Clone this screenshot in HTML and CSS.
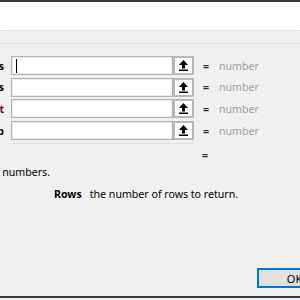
FILE: index.html
```html
<!DOCTYPE html>
<html lang="en">
<head>
    <meta charset="UTF-8">
    <meta name="viewport" content="width=device-width, initial-scale=1.0">
    <title>Function Arguments</title>
    <link rel="stylesheet" href="styles.css">
</head>
<body>
    <div class="frame-top"></div>
    <div class="header"></div>
    <div class="panel">
        <div class="band"></div>
        <div class="args">
            <div class="arg">
                <div class="label"><span>Rows</span></div>
                <div class="field"><span class="caret"></span></div>
                <button class="ref-btn"><svg width="9" height="11" viewBox="0 0 9 11"><path d="M4.5 0 L9 5 H6 V8.5 H3 V5 H0 Z" fill="#000"/><rect x="0" y="9.5" width="9" height="1.5" fill="#000"/></svg></button>
                <span class="eq">=</span>
                <span class="value">number</span>
            </div>
            <div class="arg">
                <div class="label"><span>Columns</span></div>
                <div class="field"></div>
                <button class="ref-btn"><svg width="9" height="11" viewBox="0 0 9 11"><path d="M4.5 0 L9 5 H6 V8.5 H3 V5 H0 Z" fill="#000"/><rect x="0" y="9.5" width="9" height="1.5" fill="#000"/></svg></button>
                <span class="eq">=</span>
                <span class="value">number</span>
            </div>
            <div class="arg">
                <div class="label start"><span>Start</span></div>
                <div class="field"></div>
                <button class="ref-btn"><svg width="9" height="11" viewBox="0 0 9 11"><path d="M4.5 0 L9 5 H6 V8.5 H3 V5 H0 Z" fill="#000"/><rect x="0" y="9.5" width="9" height="1.5" fill="#000"/></svg></button>
                <span class="eq">=</span>
                <span class="value">number</span>
            </div>
            <div class="arg">
                <div class="label"><span>Step</span></div>
                <div class="field"></div>
                <button class="ref-btn"><svg width="9" height="11" viewBox="0 0 9 11"><path d="M4.5 0 L9 5 H6 V8.5 H3 V5 H0 Z" fill="#000"/><rect x="0" y="9.5" width="9" height="1.5" fill="#000"/></svg></button>
                <span class="eq">=</span>
                <span class="value">number</span>
            </div>
        </div>
        <div class="divider"></div>
        <div class="result">=</div>
        <div class="desc"><span>Returns a sequence of numbers.</span></div>
        <div class="arg-desc">
            <b>Rows</b>
            <span>the number of rows to return.</span>
        </div>
        <div class="footer">
            <button class="ok">OK</button>
        </div>
    </div>
    <div class="frame-bottom"></div>
</body>
</html>
```

FILE: styles.css
```css
body {
    margin: 0;
    width: 300px;
    height: 300px;
    overflow: hidden;
    font-family: 'Noto Sans', 'Open Sans', sans-serif;
    font-size: 10.6px;
    color: #000;
    background: #f0f0f0;
}
.frame-top {
    height: 2px;
    background: #3c3c3c;
}
.header {
    height: 28px;
    background: #fff;
}
.panel {
    height: 266px;
    display: flex;
    flex-direction: column;
    background: #f0f0f0;
}
.band {
    height: 12px;
    border-top: 1px dotted #d8d8d8;
    border-bottom: 1px solid #e0e0e0;
}
.args {
    display: flex;
    flex-direction: column;
    gap: 2.7px;
    padding-top: 12px;
}
.arg {
    display: flex;
    align-items: center;
    height: 19px;
}
.label {
    width: 4px;
    display: flex;
    justify-content: flex-end;
    white-space: nowrap;
    font-weight: bold;
    margin-right: 7px;
}
.label.start {
    color: #5e1717;
}
.field {
    width: 162px;
    height: 19px;
    box-sizing: border-box;
    background: #fff;
    border: 1px solid #b2b2b2;
    box-shadow: inset 0 0 0 1px #ececec;
    display: flex;
    align-items: center;
    padding-left: 4px;
}
.caret {
    width: 1px;
    height: 14px;
    background: #000;
}
.ref-btn {
    width: 21px;
    height: 19px;
    margin: 0;
    padding: 0;
    background: #fff;
    border: 2px solid #b8b8b8;
    display: flex;
    align-items: center;
    justify-content: center;
}
.eq {
    margin-left: 9px;
    width: 16px;
    color: #333;
    font-weight: bold;
}
.value {
    color: #a0a0a0;
}
.divider {
    margin-top: 3px;
    margin-left: 13px;
    width: 180px;
    border-top: 1px dotted #cfcfcf;
}
.result {
    margin-top: 3px;
    height: 16px;
    line-height: 16px;
    padding-left: 202px;
    color: #333;
    font-weight: bold;
}
.desc {
    margin-top: 1px;
    width: 50px;
    height: 16px;
    line-height: 16px;
    display: flex;
    justify-content: flex-end;
    white-space: nowrap;
}
.arg-desc {
    margin-top: 6px;
    height: 16px;
    line-height: 16px;
    display: flex;
    gap: 8px;
    padding-left: 54px;
    white-space: nowrap;
}
.footer {
    margin-top: auto;
    padding: 0 0 8px 257px;
}
.ok {
    width: 75px;
    height: 20px;
    margin: 0;
    padding: 0;
    font-family: inherit;
    font-size: 11px;
    color: #000;
    background: #e1e1e1;
    border: 2px solid #0078d7;
}
.frame-bottom {
    height: 2px;
    background: #3c3c3c;
}
```
